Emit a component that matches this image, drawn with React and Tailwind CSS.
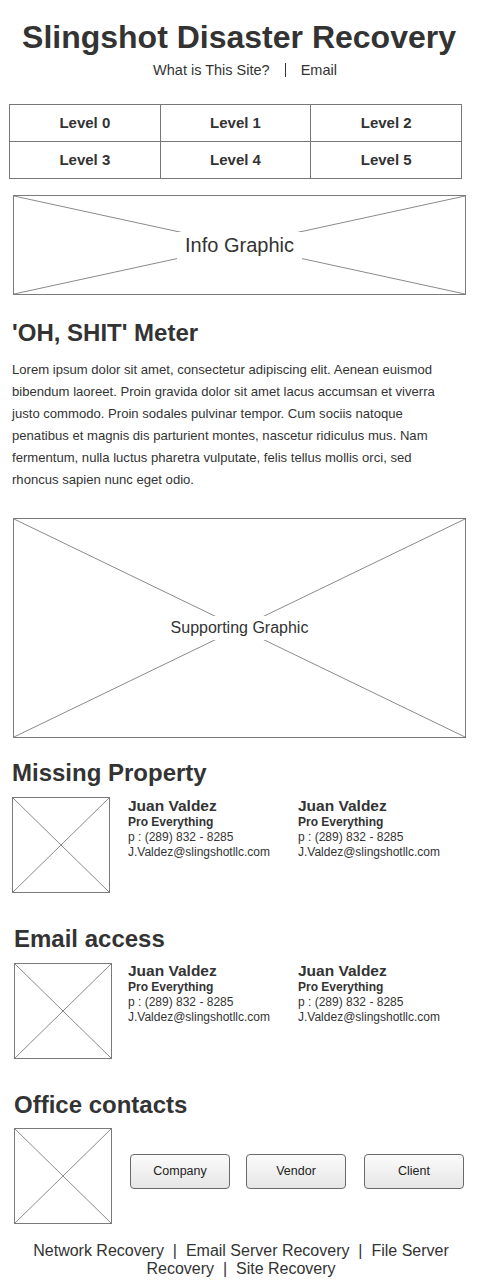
const font = { fontFamily: '"Liberation Sans", Arial, sans-serif' }

function Crossed({ className = '', label, labelClass = '' }) {
  return (
    <div className={`relative border border-[#7a7a7a] bg-white ${className}`}>
      <svg className="absolute inset-0 h-full w-full" viewBox="0 0 100 100" preserveAspectRatio="none" aria-hidden>
        <line x1="0" y1="0" x2="100" y2="100" stroke="#8a8a8a" strokeWidth="1" vectorEffect="non-scaling-stroke" />
        <line x1="100" y1="0" x2="0" y2="100" stroke="#8a8a8a" strokeWidth="1" vectorEffect="non-scaling-stroke" />
      </svg>
      {label && (
        <div className="absolute inset-0 flex items-center justify-center">
          <span className={`bg-white px-2 text-[#333] ${labelClass}`}>{label}</span>
        </div>
      )}
    </div>
  )
}

function Contact() {
  return (
    <div className="w-[170px] text-[#333]">
      <div className="text-[15.5px] font-bold leading-[18px]">Juan Valdez</div>
      <div className="text-[12px] font-bold leading-[15px]">Pro Everything</div>
      <div className="text-[12px] leading-[15px]">p : (289) 832 - 8285</div>
      <div className="text-[12px] leading-[15px]">J.Valdez@slingshotllc.com</div>
    </div>
  )
}

export default function App() {
  return (
    <div className="w-[490px] bg-white pb-[9px] text-[#333]" style={font}>
      <h1 className="pt-[19px] pr-[12px] text-center text-[32px] font-bold leading-[36px]">
        Slingshot Disaster Recovery
      </h1>
      <div className="mt-[5px] flex items-center justify-center gap-[15px] text-[14.5px] leading-[20px]">
        <span>What is This Site?</span>
        <span className="inline-block h-[14px] w-px bg-[#333]" />
        <span>Email</span>
      </div>

      <div className="mt-[24px] ml-[9px] grid w-[453px] grid-cols-3 gap-px border border-[#777] bg-[#777] text-[15px] font-bold">
        {['Level 0', 'Level 1', 'Level 2', 'Level 3', 'Level 4', 'Level 5'].map((l) => (
          <div key={l} className="flex h-[36px] items-center justify-center bg-white">
            {l}
          </div>
        ))}
      </div>

      <Crossed
        className="mt-[16px] ml-[13px] h-[100px] w-[453px]"
        label="Info Graphic"
        labelClass="py-[2px] text-[20px] leading-[23px]"
      />

      <h2 className="mt-[24px] ml-[12px] text-[24px] font-bold leading-[28px]">'OH, SHIT' Meter</h2>
      <p className="mt-[12px] ml-[12px] w-[460px] text-[13.1px] leading-[22px]">
        Lorem ipsum dolor sit amet, consectetur adipiscing elit. Aenean euismod
        <br />
        bibendum laoreet. Proin gravida dolor sit amet lacus accumsan et viverra
        <br />
        justo commodo. Proin sodales pulvinar tempor. Cum sociis natoque
        <br />
        penatibus et magnis dis parturient montes, nascetur ridiculus mus. Nam
        <br />
        fermentum, nulla luctus pharetra vulputate, felis tellus mollis orci, sed
        <br />
        rhoncus sapien nunc eget odio.
      </p>

      <Crossed
        className="mt-[27px] ml-[13px] h-[220px] w-[453px]"
        label="Supporting Graphic"
        labelClass="py-[3px] text-[16px] leading-[18px]"
      />

      <h2 className="mt-[21px] ml-[12px] text-[24px] font-bold leading-[28px]">Missing Property</h2>
      <div className="mt-[10px] flex items-start">
        <Crossed className="ml-[12px] h-[96px] w-[98px]" />
        <div className="ml-[18px] flex">
          <Contact />
          <Contact />
        </div>
      </div>

      <h2 className="mt-[32px] ml-[14px] text-[24px] font-bold leading-[28px]">Email access</h2>
      <div className="mt-[10px] flex items-start">
        <Crossed className="ml-[14px] h-[96px] w-[98px]" />
        <div className="-mt-[1px] ml-[16px] flex">
          <Contact />
          <Contact />
        </div>
      </div>

      <h2 className="mt-[32px] ml-[14px] text-[24px] font-bold leading-[28px]">Office contacts</h2>
      <div className="mt-[9px] flex items-start">
        <Crossed className="ml-[14px] h-[96px] w-[98px]" />
        <div className="mt-[26px] ml-[18px] flex">
          {['Company', 'Vendor', 'Client'].map((b, i) => (
            <button
              key={b}
              type="button"
              className={`h-[35px] w-[100px] rounded-[4px] border border-[#6a6a6a] bg-gradient-to-b from-[#fbfbfb] to-[#e6e6e6] text-[12.5px] text-[#222] ${
                i === 1 ? 'ml-[16px]' : i === 2 ? 'ml-[18px]' : ''
              }`}
            >
              {b}
            </button>
          ))}
        </div>
      </div>

      <p className="mt-[18px] ml-[20px] w-[442px] text-center text-[16px] leading-[18px]">
        {'Network Recovery\u00a0 |\u00a0 Email Server Recovery\u00a0 |\u00a0 File Server Recovery\u00a0 |\u00a0 Site Recovery'}
      </p>
    </div>
  )
}
